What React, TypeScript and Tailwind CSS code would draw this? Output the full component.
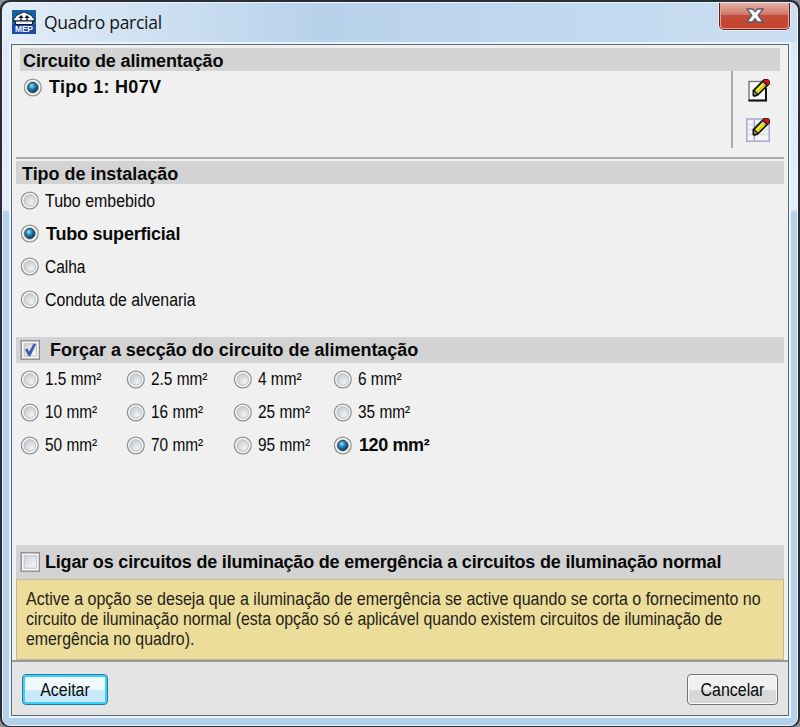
import type { ReactNode } from 'react';

interface OptionProps {
  label: string;
  checked?: boolean;
  className?: string;
}

const installTypes = [
  { label: 'Tubo embebido', spacing: 'scale-x-[0.885]' },
  { label: 'Tubo superficial', spacing: 'pl-px tracking-[-0.22px]', checked: true },
  { label: 'Calha', spacing: 'scale-x-[0.86]' },
  { label: 'Conduta de alvenaria', spacing: 'scale-x-[0.88]' },
];

const sections = ['1.5', '2.5', '4', '6', '10', '16', '25', '35', '50', '70', '95', '120'];

function Radio({ checked }: { checked?: boolean }) {
  return (
    <svg className="h-[19px] w-[19px] shrink-0" viewBox="0 0 19 19">
      <defs>
        <radialGradient id="radio-off" cx="0.65" cy="0.7" r="0.7">
          <stop offset="0" stopColor="#f1f2f3" />
          <stop offset="1" stopColor="#c9cdd1" />
        </radialGradient>
        <radialGradient id="radio-on" cx="0.4" cy="0.35" r="0.65">
          <stop offset="0" stopColor="#a5e4f8" />
          <stop offset="0.4" stopColor="#2c91c3" />
          <stop offset="1" stopColor="#082f50" />
        </radialGradient>
      </defs>
      <circle cx="9.8" cy="9.5" r="8.4" fill="#f7f7f7" stroke="#929292" strokeWidth="1.3" />
      <circle cx="9.8" cy="9.5" r="5.8" fill="url(#radio-off)" stroke="#b5b9bd" strokeWidth="0.9" />
      {checked && <circle cx="9.8" cy="9.5" r="5.1" fill="url(#radio-on)" stroke="#17415f" strokeWidth="0.9" />}
    </svg>
  );
}

function Option({ label, checked, className = '' }: OptionProps) {
  return (
    <div className="flex h-[33px] items-center gap-[6px]">
      <Radio checked={checked} />
      <span className={`origin-left whitespace-nowrap ${checked ? 'font-bold' : ''} ${className}`}>{label}</span>
    </div>
  );
}

function Checkbox({ checked }: { checked?: boolean }) {
  return (
    <svg className="h-5 w-5 shrink-0" viewBox="0 0 20 20">
      <defs>
        <linearGradient id="check-bg" x1="0" y1="0" x2="1" y2="1">
          <stop offset="0" stopColor="#cdd1d6" />
          <stop offset="1" stopColor="#fafafa" />
        </linearGradient>
      </defs>
      <rect x="1.2" y="0.8" width="18.2" height="18.4" fill="#f8f8f8" stroke="#8b8d90" strokeWidth="1.4" />
      <rect x="4.2" y="3.8" width="12.2" height="12.4" fill="url(#check-bg)" stroke="#bcc0c4" />
      {checked && <path d="M5 9.6L7.3 8.6L9.2 11.6L13.6 3.4L16 4.3L10.4 16H8.4Z" fill="#405ba7" />}
    </svg>
  );
}

function Heading({ children, className }: { children: ReactNode; className: string }) {
  return <div className={`flex items-center whitespace-nowrap bg-[#d3d3d3] font-bold ${className}`}>{children}</div>;
}

function Pencil() {
  return (
    <>
      <path d="M6.5 17V11.3L16.2 1.6L18 0H22L24 2.2V5L12 16.8L8.3 18Z" fill="#151515" />
      <path d="M9 11.4L16 4.3L19.1 7.4L12 14.6Z" fill="#f7ee1c" />
      <path d="M11 13.4L17.9 6.5" stroke="#aaa12b" strokeWidth="0.8" />
      <path d="M8.2 12.7L10.9 15.3L8.3 16.1Z" fill="#b5b5b5" />
      <path d="M16.5 3.8L19.6 6.9" stroke="#ddd" strokeWidth="1.3" />
      <path d="M17.4 2L18.8 0.6H21.8L23.4 2.4V4.5L21.7 6Z" fill="#e01018" />
    </>
  );
}

function EditIcon() {
  return (
    <svg className="h-6 w-6" viewBox="0 0 24 24">
      <rect x="3" y="2.5" width="17" height="19" fill="#f9f9f9" stroke="#777" strokeWidth="1.4" />
      <path d="M2.5 21.5H20V9" fill="none" stroke="#111" strokeWidth="2" />
      <Pencil />
    </svg>
  );
}

function TableEditIcon() {
  return (
    <svg className="h-6 w-6" viewBox="0 0 24 24">
      <rect x="0.8" y="1" width="22.4" height="22.2" fill="#f4f4f5" stroke="#a6a6d6" strokeWidth="1.5" />
      <path d="M2 6.5H22M2 11.5H22M2 16.5H22" stroke="#dadadd" strokeWidth="1.4" />
      <path d="M8.3 1V23" stroke="#a6a6d6" strokeWidth="1.4" />
      <Pencil />
    </svg>
  );
}

function AppIcon() {
  return (
    <svg className="h-6 w-6" viewBox="0 0 24 24">
      <rect width="24" height="24" fill="#1761a8" />
      <rect y="14.5" width="24" height="9.5" fill="#2149a0" />
      <path d="M1.5 9.5L5 5L12 1.8L19 5L22.5 9.5V11.5H20.5V14.5H3.5V11.5H1.5Z" fill="#f4f7fa" stroke="#111820" strokeWidth="1" />
      <path d="M2 10.8H9V7.5M22 10.8H15V7.5M9 10.8H15" fill="none" stroke="#111820" strokeWidth="1.3" />
      <path d="M6.3 8L9 5L11.5 8ZM12.5 8L15 5L17.7 8Z" fill="#111820" />
      <text x="12" y="22.3" textAnchor="middle" textLength="18" fontSize="8.5" fontWeight="bold" fill="#edf4ff">MEP</text>
    </svg>
  );
}

function TitleBar() {
  return (
    <div className="flex h-[39px] items-start justify-between pl-[9px] pr-[7px]">
      <div className="flex items-center gap-[8px] pt-[7px]">
        <AppIcon />
        <span className="whitespace-nowrap font-['Open_Sans','Noto_Sans',sans-serif] text-[17.5px] leading-6 tracking-[-0.26px] text-[#151515]">
          Quadro parcial
        </span>
      </div>
      <div className="flex h-[27px] w-[71px] items-center justify-center rounded-b-[5px] border border-t-0 border-[#651e1b] bg-linear-to-b from-[#e5b1a5] from-0% via-[#cc7263] via-48% to-[#d65c42] shadow-[0_0_0_1px_#e6eef5]">
        <div className="flex h-full w-full items-center justify-center rounded-b-[4px] border border-t-0 border-[#e6a497] bg-linear-to-b from-transparent from-50% to-[#b8271580] to-50%">
          <svg className="h-[15px] w-[18px]" viewBox="0 0 18 15">
            <path d="M1 1H6.6L9 3.8L11.4 1H17L12.2 7.3L17 14H11.6L9 10.7L6.4 14H1L5.8 7.3Z" fill="#fbfbfb" stroke="#525e70" strokeWidth="1.3" />
          </svg>
        </div>
      </div>
    </div>
  );
}

function App() {
  return (
    <div className="h-[727px] w-[800px] bg-[#8c8f91] font-['Liberation_Sans',Arial,sans-serif] text-[18px] leading-5 text-[#090909]">
      <div className="h-full rounded-[9px] bg-[#292d36] px-[2px] pt-[2px] pb-px">
        <div className="h-full rounded-[8px] border border-[#edf5fb] bg-linear-to-b from-[#dbe8f5] from-0% via-[#e4eef9] via-[207px] to-[#b4d0ed] to-[209px]">
          <div className="rounded-t-[7px] bg-linear-to-r from-[#e3edf7] from-0% via-[#b8d2eb] via-40% to-[#cadef2]">
            <TitleBar />
          </div>
          <div className="mx-[6px] h-[676px] border-2 border-[#e9f5fc]">
            <div className="flex h-[672px] flex-col border border-[#5c6872] bg-[#f0f0f0]">
              <div className="mx-[4px] h-[114px] border-b-2 border-[#aaa] pt-[3px]">
                <Heading className="mx-[4px] h-[23px] pt-[2px] pl-[3px] tracking-[-0.12px]">Circuito de alimentação</Heading>
                <div className="flex h-[77px] justify-between pl-[7px] pr-[13px]">
                  <Option label="Tipo 1: H07V" checked className="pb-[2px] pl-px tracking-[0.3px]" />
                  <div className="flex w-[40px] flex-col gap-[15px] border-l-2 border-[#a9a9a9] pt-[8px] pl-[13px]">
                    <EditIcon />
                    <TableEditIcon />
                  </div>
                </div>
              </div>
              <div className="mx-[4px] pt-[2px]">
                <Heading className="h-[23px] pt-[2px] pl-[6px] tracking-[-0.03px]">Tipo de instalação</Heading>
                <div className="h-[153px] pl-[4px]">
                  {installTypes.map((type) => (
                    <Option key={type.label} label={type.label} checked={type.checked} className={type.spacing} />
                  ))}
                </div>
                <Heading className="h-[26px] gap-[10px] pl-[4px] tracking-[-0.02px]">
                  <Checkbox checked />
                  <span>Forçar a secção do circuito de alimentação</span>
                </Heading>
                <div className="grid h-[182px] grid-cols-[106px_107px_100px_120px] content-start pl-[4px]">
                  {sections.map((size) => (
                    <Option
                      key={size}
                      label={`${size} mm²`}
                      checked={size === '120'}
                      className={size === '120' ? 'pb-[2px] pl-px tracking-[-0.4px]' : 'scale-x-[0.855] pb-[2px]'}
                    />
                  ))}
                </div>
                <Heading className="h-[34px] gap-[5px] pl-[4px] tracking-[-0.19px]">
                  <Checkbox />
                  <span>Ligar os circuitos de iluminação de emergência a circuitos de iluminação normal</span>
                </Heading>
                <div className="h-[81px] border border-[#bfb99f] bg-[#ecdd9a] pt-[9px] pl-[9px] whitespace-nowrap text-[#242219]">
                  <p className="w-max origin-left scale-x-[0.891]">
                    Active a opção se deseja que a iluminação de emergência se active quando se corta o fornecimento no
                  </p>
                  <p className="w-max origin-left scale-x-[0.881]">
                    circuito de iluminação normal (esta opção só é aplicável quando existem circuitos de iluminação de
                  </p>
                  <p className="w-max origin-left scale-x-[0.881]">emergência no quadro).</p>
                </div>
              </div>
              <div className="flex flex-1 items-start justify-between border-t-2 border-[#999] bg-[#e4e4e4] pt-[12px] pr-[10px] pl-[10px]">
                <button className="h-[31px] w-[86px] rounded-[4px] border border-[#287ba3] bg-linear-to-b from-[#f0f9fe] from-50% to-[#c7e9fa] to-50% shadow-[inset_0_0_0_2px_#38d2fa]">
                  <span className="inline-block w-full scale-x-[0.885]">Aceitar</span>
                </button>
                <button className="h-[31px] w-[91px] rounded-[4px] border border-[#747474] bg-linear-to-b from-[#f0f0f0] from-50% to-[#d8d8d8] to-50% shadow-[inset_0_0_0_1px_#fafafa]">
                  <span className="inline-block w-full scale-x-[0.885]">Cancelar</span>
                </button>
              </div>
            </div>
          </div>
        </div>
      </div>
    </div>
  );
}

export default App;
